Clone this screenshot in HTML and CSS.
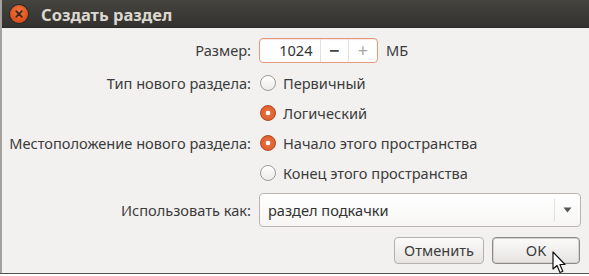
FILE: index.html
```html
<!DOCTYPE html>
<html lang="ru">
    <head>
        <meta charset="UTF-8" />
        <title>Создать раздел</title>
        <link rel="stylesheet" href="styles.css">
    </head>
    <body>
        <div class="dialog">
            <div class="titlebar">
                <span class="close">
                    <svg width="18" height="18" viewBox="0 0 18 18">
                        <path d="M6.2 6.2 L11.8 11.8 M11.8 6.2 L6.2 11.8" stroke="#3a2a22" stroke-width="1.8" stroke-linecap="round"/>
                    </svg>
                </span>
                <span class="title">Создать раздел</span>
            </div>

            <div class="content">
                <div class="form">
                    <div class="label">Размер:</div>
                    <div class="field">
                        <div class="spin">
                            <span class="spin-value">1024</span>
                            <span class="spin-btn">&minus;</span>
                            <span class="spin-btn light">+</span>
                        </div>
                        <span class="unit">МБ</span>
                    </div>

                    <div class="label">Тип нового раздела:</div>
                    <div class="field"><span class="radio"></span>Первичный</div>

                    <div class="label"></div>
                    <div class="field"><span class="radio on"></span>Логический</div>

                    <div class="label">Местоположение нового раздела:</div>
                    <div class="field"><span class="radio on"></span>Начало этого пространства</div>

                    <div class="label"></div>
                    <div class="field"><span class="radio"></span>Конец этого пространства</div>

                    <div class="label row-combo">Использовать как:</div>
                    <div class="field row-combo">
                        <div class="combo">
                            <span class="combo-text">раздел подкачки</span>
                            <span class="combo-arrow">
                                <svg width="9" height="6" viewBox="0 0 9 6"><path d="M0.5 0.5 L8.5 0.5 L4.5 5.5 Z" fill="#555"/></svg>
                            </span>
                        </div>
                    </div>
                </div>

                <div class="buttons">
                    <span class="button">Отменить</span>
                    <span class="button default">OK</span>
                </div>
            </div>

            <svg class="cursor" width="16" height="24" viewBox="0 0 16 24">
                <path d="M1 1 L1 18 L5 14.5 L8 21.5 L10.8 20.3 L7.9 13.5 L13 13.5 Z" fill="#fff" stroke="#111" stroke-width="1.2" stroke-linejoin="round"/>
            </svg>
        </div>
        <div class="under"></div>
    </body>
</html>
```

FILE: styles.css
```css
html, body
{
    margin: 0;
    padding: 0;
    background-color: #f2f1f0;
    font-family: "Noto Sans", "DejaVu Sans", sans-serif;
    font-size: 14.6px;
    color: #3c3c3c;
    overflow: hidden;
}

.dialog
{
    position: relative;
    height: 273px;
    border-left: 2px solid #a4a29e;
    box-sizing: border-box;
}

.titlebar
{
    height: 28px;
    display: flex;
    align-items: center;
    background: linear-gradient(#45443f, #3a3935 60%, #33322f);
    border-bottom: 1px solid #2a2927;
    box-sizing: border-box;
}

.close
{
    width: 18px;
    height: 18px;
    margin-left: 8px;
    border-radius: 50%;
    background: radial-gradient(circle at 50% 35%, #f5773d, #e05420 60%, #c9461a);
    box-shadow: 0 0 0 1px #2b2a27;
}

.close svg
{
    display: block;
}

.title
{
    margin-left: 13px;
    margin-top: 1px;
    color: #dcd8cf;
    font-weight: bold;
    font-size: 16.5px;
}

.content
{
    padding-top: 4px;
}

.form
{
    display: grid;
    grid-template-columns: 249px 1fr;
    grid-template-rows: 36px 30px 30px 30px 30px 39px;
    column-gap: 8px;
}

.label
{
    display: flex;
    align-items: center;
    justify-content: flex-end;
    white-space: nowrap;
}

.field
{
    display: flex;
    align-items: center;
    white-space: nowrap;
}

.row-combo
{
    margin-top: 5px;
}

.spin
{
    display: flex;
    align-items: stretch;
    width: 119px;
    height: 25px;
    border: 1px solid #e39a7b;
    border-radius: 4px;
    background-color: #fff;
    box-shadow: inset 0 1px 1px #f6e6df;
    box-sizing: border-box;
}

.spin-value
{
    width: 61px;
    padding-right: 7px;
    text-align: right;
    line-height: 23px;
    color: #333;
    box-sizing: border-box;
}

.spin-btn
{
    width: 28px;
    text-align: center;
    line-height: 23px;
    font-size: 18px;
    font-weight: bold;
    color: #444;
    border-left: 1px solid #e2e0dd;
}

.spin-btn.light
{
    color: #a9a7a4;
    font-weight: normal;
    width: 29px;
}

.unit
{
    margin-left: 8px;
}

.radio
{
    width: 16px;
    height: 16px;
    margin-left: 1px;
    margin-right: 7px;
    border-radius: 50%;
    border: 1px solid #9e9b97;
    background: linear-gradient(#ffffff, #ecebe9);
    box-sizing: border-box;
}

.radio.on
{
    border-color: #b4481f;
    background: radial-gradient(circle, #ffffff 0, #ffffff 2px, #e76d3b 2.6px, #d95a27 100%);
}

.combo
{
    display: flex;
    align-items: center;
    width: 322px;
    height: 34px;
    border: 1px solid #b9b6b2;
    border-radius: 4px;
    background: linear-gradient(#ffffff, #f7f6f5);
    box-sizing: border-box;
}

.combo-text
{
    flex: 1;
    padding-left: 8px;
    color: #333;
}

.combo-arrow
{
    width: 25px;
    height: 22px;
    display: flex;
    align-items: center;
    justify-content: center;
    border-left: 1px solid #e3e1de;
}

.buttons
{
    display: flex;
    justify-content: flex-end;
    gap: 8px;
    margin-top: 10px;
    padding-right: 9px;
}

.button
{
    height: 27px;
    line-height: 25px;
    text-align: center;
    border: 1px solid #b4b1ad;
    border-radius: 4px;
    background: linear-gradient(#fbfbfa, #e6e4e1);
    box-sizing: border-box;
    color: #3c3c3c;
}

.button:first-child
{
    width: 90px;
}

.button.default
{
    width: 88px;
    border-color: #8d8a86;
    box-shadow: inset 0 0 0 1px #d4d2ce;
}

.cursor
{
    position: absolute;
    left: 550px;
    top: 251px;
}

.under
{
    height: 3px;
    border-top: 1px solid #55534f;
    background-color: #fff;
}
```
